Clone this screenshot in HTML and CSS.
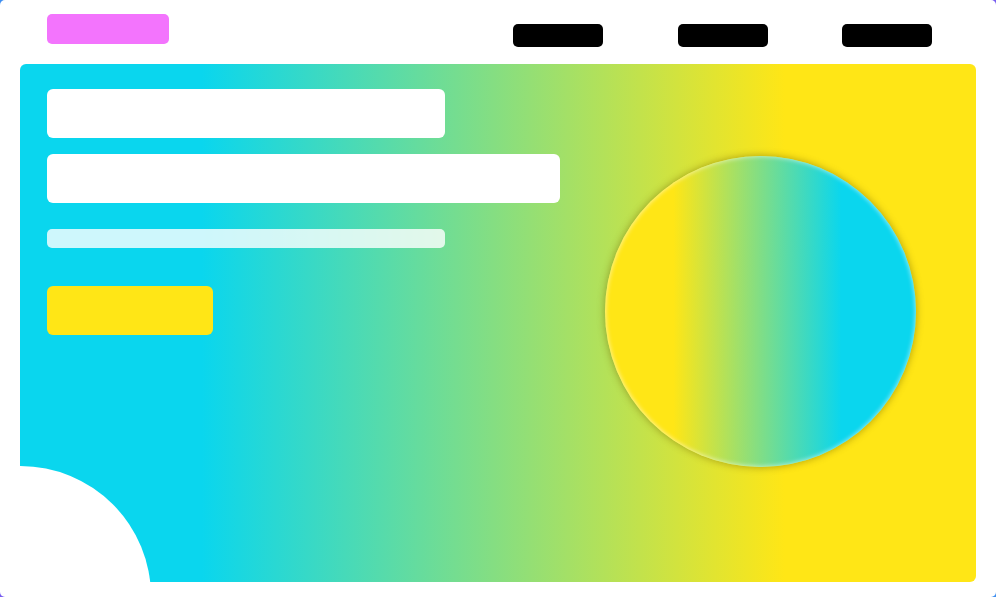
FILE: index.html
```html
<!DOCTYPE html>
<html lang="en">
<head>
<meta charset="utf-8">
<title>Landing</title>
<link rel="stylesheet" href="styles.css">
</head>
<body>
<div class="page">
  <header class="header">
    <div class="logo"></div>
    <nav class="nav">
      <span class="nav-item"></span>
      <span class="nav-item"></span>
      <span class="nav-item"></span>
    </nav>
  </header>
  <section class="hero">
    <div class="hero-text">
      <div class="bar bar-title"></div>
      <div class="bar bar-title-wide"></div>
      <div class="bar bar-sub"></div>
      <div class="cta"></div>
    </div>
    <div class="orb"></div>
    <div class="corner-blob"></div>
  </section>
</div>
</body>
</html>
```

FILE: styles.css
```css
html, body {
  margin: 0;
  padding: 0;
  height: 100%;
}
body {
  background: linear-gradient(135deg, #3f8ff0, #8a4cf0 50%, #3f8ff0);
  font-family: "Liberation Sans", Arial, sans-serif;
}
.page {
  background: #ffffff;
  height: 597px;
  border-radius: 5px;
  overflow: hidden;
  display: flex;
  flex-direction: column;
}
.header {
  height: 64px;
  flex: none;
  display: flex;
  justify-content: space-between;
  align-items: flex-start;
  padding: 0 64px 0 47px;
}
.logo {
  width: 122px;
  height: 30px;
  margin-top: 14px;
  background: #f374fd;
  border-radius: 5px;
}
.nav {
  display: flex;
  gap: 74.5px;
  margin-top: 24px;
}
.nav-item {
  display: block;
  width: 90px;
  height: 23px;
  background: #000000;
  border-radius: 5px;
}
.hero {
  position: relative;
  overflow: hidden;
  height: 518px;
  margin: 0 20px 0 19.5px;
  border-radius: 6px 6px 6px 0;
  background: linear-gradient(90deg, #0ad6ee 19%, #ffe616 80%);
  display: flex;
  align-items: flex-start;
  padding: 25px 0 0 27px;
  box-sizing: border-box;
}
.hero-text {
  width: 513px;
  display: flex;
  flex-direction: column;
  align-items: flex-start;
}
.bar {
  background: #ffffff;
  border-radius: 6px;
}
.bar-title {
  width: 398px;
  height: 49px;
}
.bar-title-wide {
  width: 513px;
  height: 49px;
  margin-top: 16px;
}
.bar-sub {
  width: 398px;
  height: 19px;
  margin-top: 26px;
  background: rgba(255, 255, 255, 0.8);
  border-radius: 5px;
}
.cta {
  width: 166px;
  height: 49px;
  margin-top: 38px;
  background: #ffe616;
  border-radius: 6px;
}
.orb {
  flex: none;
  width: 311px;
  height: 311px;
  margin: 67px 0 0 45px;
  border-radius: 50%;
  background: linear-gradient(90deg, #ffe616 22%, #0ad6ee 76%);
  box-shadow: 0 0 7px 1px rgba(110, 100, 0, 0.45), inset 0 0 4px 1px rgba(255, 255, 255, 0.5);
  filter: blur(0.7px);
}
.corner-blob {
  position: absolute;
  left: -130px;
  top: 402px;
  width: 261px;
  height: 261px;
  border-radius: 50%;
  background: #ffffff;
}
```
